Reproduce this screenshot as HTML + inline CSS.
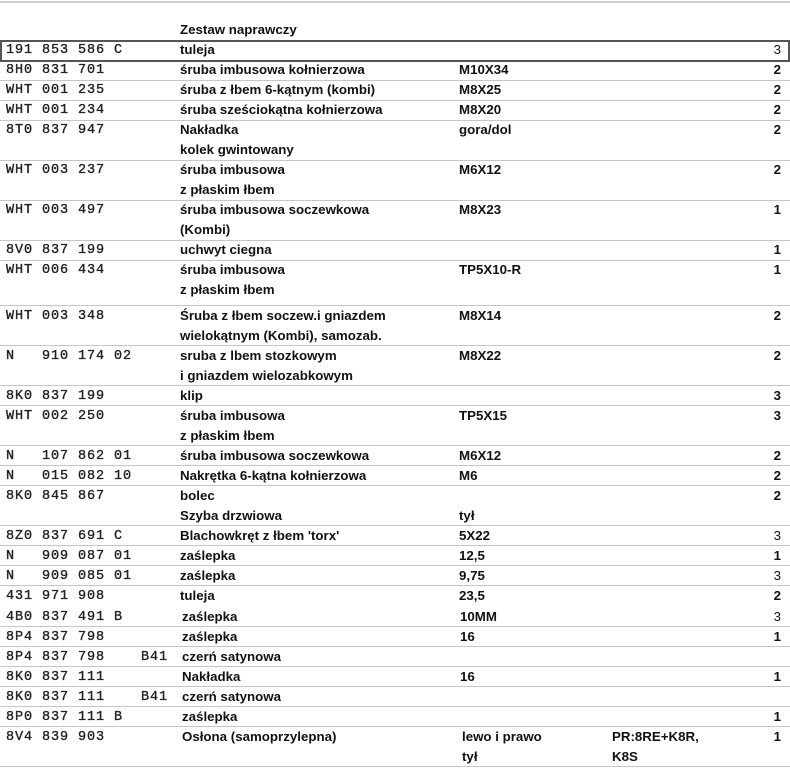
<!DOCTYPE html>
<html><head><meta charset="utf-8"><style>
html,body{margin:0;padding:0;background:#fff;width:790px;height:768px;overflow:hidden;position:relative}
.l{position:absolute;left:0;width:790px;height:1px;background:#c6c6c6}
.t{position:absolute;height:20px;line-height:20px;white-space:pre;color:#111}
.c{font-family:"Liberation Mono",monospace;font-size:13.5px;letter-spacing:0.9px;font-weight:normal;left:6px;color:#222;-webkit-text-stroke:0.35px #222;line-height:21px}
.d{font-family:"Liberation Sans",sans-serif;font-size:13.3px;font-weight:bold;left:180px}
.m{font-family:"Liberation Sans",sans-serif;font-size:13.3px;font-weight:bold;left:459px}
.n{font-family:"Liberation Sans",sans-serif;font-size:13.3px;font-weight:bold;left:612px}
.q{font-family:"Liberation Sans",sans-serif;font-size:13.3px;font-weight:bold;right:9px;text-align:right}
.hl{position:absolute;left:0;top:40px;width:786px;height:18px;border:2px solid #555}
</style></head><body>
<div class="l" style="top:1px;height:2px;background:#d0d0d0"></div>
<div class="t d" style="top:20px">Zestaw naprawczy</div>
<div class="hl"></div>
<div class="t c" style="top:40px">191 853 586 C</div><div class="t d" style="top:40px">tuleja</div><div class="t q" style="top:40px;font-weight:normal">3</div>

<div class="t c" style="top:60px">8H0 831 701</div><div class="t d" style="top:60px">śruba imbusowa kołnierzowa</div><div class="t m" style="top:60px">M10X34</div><div class="t q" style="top:60px">2</div>
<div class="l" style="top:80px"></div>
<div class="t c" style="top:80px">WHT 001 235</div><div class="t d" style="top:80px">śruba z łbem 6-kątnym (kombi)</div><div class="t m" style="top:80px">M8X25</div><div class="t q" style="top:80px">2</div>
<div class="l" style="top:100px"></div>
<div class="t c" style="top:100px">WHT 001 234</div><div class="t d" style="top:100px">śruba sześciokątna kołnierzowa</div><div class="t m" style="top:100px">M8X20</div><div class="t q" style="top:100px">2</div>
<div class="l" style="top:120px"></div>
<div class="t c" style="top:120px">8T0 837 947</div><div class="t d" style="top:120px">Nakładka</div><div class="t d" style="top:140px">kolek gwintowany</div><div class="t m" style="top:120px">gora/dol</div><div class="t q" style="top:120px">2</div>
<div class="l" style="top:160px"></div>
<div class="t c" style="top:160px">WHT 003 237</div><div class="t d" style="top:160px">śruba imbusowa</div><div class="t d" style="top:180px">z płaskim łbem</div><div class="t m" style="top:160px">M6X12</div><div class="t q" style="top:160px">2</div>
<div class="l" style="top:200px"></div>
<div class="t c" style="top:200px">WHT 003 497</div><div class="t d" style="top:200px">śruba imbusowa soczewkowa</div><div class="t d" style="top:220px">(Kombi)</div><div class="t m" style="top:200px">M8X23</div><div class="t q" style="top:200px">1</div>
<div class="l" style="top:240px"></div>
<div class="t c" style="top:240px">8V0 837 199</div><div class="t d" style="top:240px">uchwyt ciegna</div><div class="t q" style="top:240px">1</div>
<div class="l" style="top:260px"></div>
<div class="t c" style="top:260px">WHT 006 434</div><div class="t d" style="top:260px">śruba imbusowa</div><div class="t d" style="top:280px">z płaskim łbem</div><div class="t m" style="top:260px">TP5X10-R</div><div class="t q" style="top:260px">1</div>
<div class="l" style="top:305px"></div>
<div class="t c" style="top:306px">WHT 003 348</div><div class="t d" style="top:306px">Śruba z łbem soczew.i gniazdem</div><div class="t d" style="top:326px">wielokątnym (Kombi), samozab.</div><div class="t m" style="top:306px">M8X14</div><div class="t q" style="top:306px">2</div>
<div class="l" style="top:345px"></div>
<div class="t c" style="top:346px">N   910 174 02</div><div class="t d" style="top:346px">sruba z lbem stozkowym</div><div class="t d" style="top:366px">i gniazdem wielozabkowym</div><div class="t m" style="top:346px">M8X22</div><div class="t q" style="top:346px">2</div>
<div class="l" style="top:385px"></div>
<div class="t c" style="top:386px">8K0 837 199</div><div class="t d" style="top:386px">klip</div><div class="t q" style="top:386px">3</div>
<div class="l" style="top:405px"></div>
<div class="t c" style="top:406px">WHT 002 250</div><div class="t d" style="top:406px">śruba imbusowa</div><div class="t d" style="top:426px">z płaskim łbem</div><div class="t m" style="top:406px">TP5X15</div><div class="t q" style="top:406px">3</div>
<div class="l" style="top:445px"></div>
<div class="t c" style="top:446px">N   107 862 01</div><div class="t d" style="top:446px">śruba imbusowa soczewkowa</div><div class="t m" style="top:446px">M6X12</div><div class="t q" style="top:446px">2</div>
<div class="l" style="top:465px"></div>
<div class="t c" style="top:466px">N   015 082 10</div><div class="t d" style="top:466px">Nakrętka 6-kątna kołnierzowa</div><div class="t m" style="top:466px">M6</div><div class="t q" style="top:466px">2</div>
<div class="l" style="top:485px"></div>
<div class="t c" style="top:486px">8K0 845 867</div><div class="t d" style="top:486px">bolec</div><div class="t d" style="top:506px">Szyba drzwiowa</div><div class="t m" style="top:506px">tył</div><div class="t q" style="top:486px">2</div>
<div class="l" style="top:525px"></div>
<div class="t c" style="top:526px">8Z0 837 691 C</div><div class="t d" style="top:526px">Blachowkręt z łbem 'torx'</div><div class="t m" style="top:526px">5X22</div><div class="t q" style="top:526px;font-weight:normal">3</div>
<div class="l" style="top:545px"></div>
<div class="t c" style="top:546px">N   909 087 01</div><div class="t d" style="top:546px">zaślepka</div><div class="t m" style="top:546px">12,5</div><div class="t q" style="top:546px">1</div>
<div class="l" style="top:565px"></div>
<div class="t c" style="top:566px">N   909 085 01</div><div class="t d" style="top:566px">zaślepka</div><div class="t m" style="top:566px">9,75</div><div class="t q" style="top:566px;font-weight:normal">3</div>
<div class="l" style="top:585px"></div>
<div class="t c" style="top:586px">431 971 908</div><div class="t d" style="top:586px">tuleja</div><div class="t m" style="top:586px">23,5</div><div class="t q" style="top:586px">2</div>
<div class="t c" style="top:607px">4B0 837 491 B</div><div class="t d" style="top:607px;left:182px">zaślepka</div><div class="t m" style="top:607px;left:460px">10MM</div><div class="t q" style="top:607px;font-weight:normal">3</div>
<div class="l" style="top:626px"></div>
<div class="t c" style="top:627px">8P4 837 798</div><div class="t d" style="top:627px;left:182px">zaślepka</div><div class="t m" style="top:627px;left:460px">16</div><div class="t q" style="top:627px">1</div>
<div class="l" style="top:646px"></div>
<div class="t c" style="top:647px">8P4 837 798    B41</div><div class="t d" style="top:647px;left:182px">czerń satynowa</div>
<div class="l" style="top:666px"></div>
<div class="t c" style="top:667px">8K0 837 111</div><div class="t d" style="top:667px;left:182px">Nakładka</div><div class="t m" style="top:667px;left:460px">16</div><div class="t q" style="top:667px">1</div>
<div class="l" style="top:686px"></div>
<div class="t c" style="top:687px">8K0 837 111    B41</div><div class="t d" style="top:687px;left:182px">czerń satynowa</div>
<div class="l" style="top:706px"></div>
<div class="t c" style="top:707px">8P0 837 111 B</div><div class="t d" style="top:707px;left:182px">zaślepka</div><div class="t q" style="top:707px">1</div>
<div class="l" style="top:726px"></div>
<div class="t c" style="top:727px">8V4 839 903</div><div class="t d" style="top:727px;left:182px">Osłona (samoprzylepna)</div><div class="t m" style="top:727px;left:462px">lewo i prawo</div><div class="t m" style="top:747px;left:462px">tył</div><div class="t n" style="top:727px">PR:8RE+K8R,</div><div class="t n" style="top:747px">K8S</div><div class="t q" style="top:727px">1</div>
<div class="l" style="top:766px"></div>
</body></html>
